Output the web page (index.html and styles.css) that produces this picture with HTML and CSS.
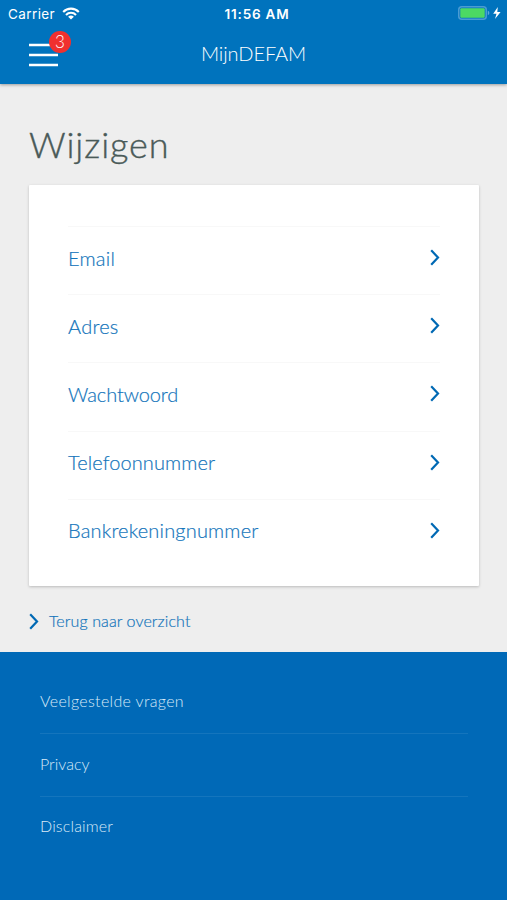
FILE: index.html
```html
<!DOCTYPE html>
<html lang="nl">
<head>
    <meta charset="UTF-8">
    <meta name="viewport" content="width=device-width, initial-scale=1.0">
    <title>MijnDEFAM</title>
    <link rel="stylesheet" href="styles.css">
</head>
<body>
    <!-- Header -->
    <header class="header">
        <div class="status-bar">
            <div class="carrier">
                <span>Carrier</span>
                <svg class="wifi" width="18" height="13" viewBox="0 0 18 13" fill="none" stroke="#fff" stroke-width="2.1">
                    <path d="M1.2 4.9a11 11 0 0 1 15.6 0"/>
                    <path d="M4 7.9a7 7 0 0 1 10 0"/>
                    <path d="M9 12.4L6.1 9.7a4.3 4.3 0 0 1 5.8 0z" fill="#fff" stroke="none"/>
                </svg>
            </div>
            <span class="time">11:56 AM</span>
            <svg class="battery" width="43" height="16" viewBox="0 0 43 16">
                <rect x="0.75" y="1.75" width="27.5" height="12.5" rx="3" fill="none" stroke="#4a9cd3" stroke-width="1.5"/>
                <rect x="2.3" y="3.3" width="24.4" height="9.4" rx="1" fill="#4cd964"/>
                <path d="M29.8 5.8q1.6.6 1.6 2.2t-1.6 2.2z" fill="#5fa9dc"/>
                <path d="M39.8 2L35.2 8.7h3.3l-1.5 5.3 5.6-7.1h-3.3z" fill="#fff"/>
            </svg>
        </div>
        <div class="nav-bar">
            <button class="menu-btn" aria-label="Menu">
                <svg class="menu-icon" viewBox="0 0 29 24"><path d="M0 2h29M0 12h29M0 22h29"/></svg>
                <span class="badge">3</span>
            </button>
            <div class="brand"><span>MijnDEFAM</span></div>
        </div>
    </header>

    <!-- Wijzigen -->
    <main class="content">
        <h1 class="title">Wijzigen</h1>
        <nav class="card">
            <a class="card-row" href="#"><span class="email">Email</span><svg class="arrow" viewBox="0 0 10 17"><path d="M1.2 1.3L8 8.5l-6.8 7.2"/></svg></a>
            <a class="card-row" href="#"><span class="adres">Adres</span><svg class="arrow" viewBox="0 0 10 17"><path d="M1.2 1.3L8 8.5l-6.8 7.2"/></svg></a>
            <a class="card-row" href="#"><span class="wachtwoord">Wachtwoord</span><svg class="arrow" viewBox="0 0 10 17"><path d="M1.2 1.3L8 8.5l-6.8 7.2"/></svg></a>
            <a class="card-row" href="#"><span class="telefoon">Telefoonnummer</span><svg class="arrow" viewBox="0 0 10 17"><path d="M1.2 1.3L8 8.5l-6.8 7.2"/></svg></a>
            <a class="card-row" href="#"><span class="bank">Bankrekeningnummer</span><svg class="arrow" viewBox="0 0 10 17"><path d="M1.2 1.3L8 8.5l-6.8 7.2"/></svg></a>
        </nav>
        <a class="back" href="#"><svg class="arrow" viewBox="0 0 10 17"><path d="M1.2 1.3L8 8.5l-6.8 7.2"/></svg><span>Terug naar overzicht</span></a>
    </main>

    <!-- Footer -->
    <footer class="footer">
        <a class="footer-link" href="#"><span class="faq">Veelgestelde vragen</span></a>
        <a class="footer-link" href="#"><span>Privacy</span></a>
        <a class="footer-link" href="#"><span class="disclaimer">Disclaimer</span></a>
    </footer>
</body>
</html>
```
FILE: styles.css
```css
* {
    margin: 0;
    padding: 0;
    box-sizing: border-box;
}

body {
    height: 900px;
    display: flex;
    flex-direction: column;
    background: #eeeeee;
    font-family: 'Lato', sans-serif;
    overflow: hidden;
}

a {
    color: inherit;
    text-decoration: none;
}

/* Header */
.header {
    height: 84px;
    flex: none;
    background: #0073bd;
    color: #fff;
    box-shadow: 0 1px 3px rgba(0, 0, 0, 0.35);
}

.status-bar {
    height: 27px;
    padding: 0 6px 0 8px;
    display: grid;
    grid-template-columns: 1fr auto 1fr;
    align-items: center;
    font-family: 'Inter', sans-serif;
    font-size: 13.5px;
}

.carrier {
    display: flex;
    align-items: center;
    gap: 7px;
    letter-spacing: 0.4px;
}

.time {
    padding-left: 5px;
    font-weight: 600;
    letter-spacing: 0.8px;
}

.battery {
    justify-self: end;
    margin-top: -1px;
}

.nav-bar {
    height: 57px;
    padding: 0 29px 2px;
    display: grid;
    grid-template-columns: 29px 1fr 29px;
    align-items: center;
}

.menu-btn {
    position: relative;
    height: 24px;
    background: none;
    border: none;
}

.menu-icon {
    display: block;
    width: 29px;
    height: 24px;
    stroke: #fff;
    stroke-width: 2.5;
}

.badge {
    position: absolute;
    top: -12px;
    left: 20px;
    width: 22px;
    height: 22px;
    border-radius: 50%;
    background: #f0302f;
    color: #fff;
    font: 300 17px/21px 'Lato', sans-serif;
    text-align: center;
}

.brand {
    padding-bottom: 3px;
    text-align: center;
    font-size: 20px;
    font-weight: 300;
    letter-spacing: -0.1px;
}

/* Wijzigen */
.content {
    height: 568px;
    flex: none;
    padding: 38px 28px 0 29px;
    color: #1475bb;
}

.title {
    height: 63px;
    line-height: 44px;
    font-size: 36px;
    font-weight: 300;
    letter-spacing: 0.9px;
    color: #4a5a58;
    -webkit-text-stroke: 0.4px #4a5a58;
}

.card {
    height: 401px;
    padding: 41px 39px 0;
    background: #fff;
    border-radius: 1px;
    box-shadow: 0 1px 3px rgba(0, 0, 0, 0.22);
}

.card-row {
    height: 68.2px;
    padding-bottom: 6px;
    display: flex;
    align-items: center;
    justify-content: space-between;
    border-top: 1px solid #f8f8f8;
    font-size: 20px;
    font-weight: 300;
    -webkit-text-stroke: 0.2px #1475bb;
}

.email,
.adres {
    letter-spacing: 0.25px;
}

.wachtwoord {
    letter-spacing: -0.1px;
}

.telefoon {
    letter-spacing: 0.1px;
}

.bank {
    letter-spacing: 0.18px;
}

.arrow {
    width: 10px;
    height: 17px;
    fill: none;
    stroke: #0069b4;
    stroke-width: 2.2;
}

.back {
    height: 70px;
    display: flex;
    align-items: center;
    gap: 10px;
    font-size: 16px;
    font-weight: 300;
    letter-spacing: 0.1px;
    -webkit-text-stroke: 0.2px #1475bb;
}

.back span {
    margin-top: -2px;
}

/* Footer */
.footer {
    flex: 1;
    padding: 19px 39px 0 40px;
    background: #0069b7;
    color: #d9eaf7;
}

.footer-link {
    height: 62.3px;
    padding-bottom: 3px;
    display: flex;
    align-items: center;
    font-size: 16px;
    font-weight: 300;
}

.footer-link + .footer-link {
    border-top: 1px solid #1475bd;
}

.faq {
    letter-spacing: 0.33px;
}

.disclaimer {
    letter-spacing: 0.15px;
}
```
